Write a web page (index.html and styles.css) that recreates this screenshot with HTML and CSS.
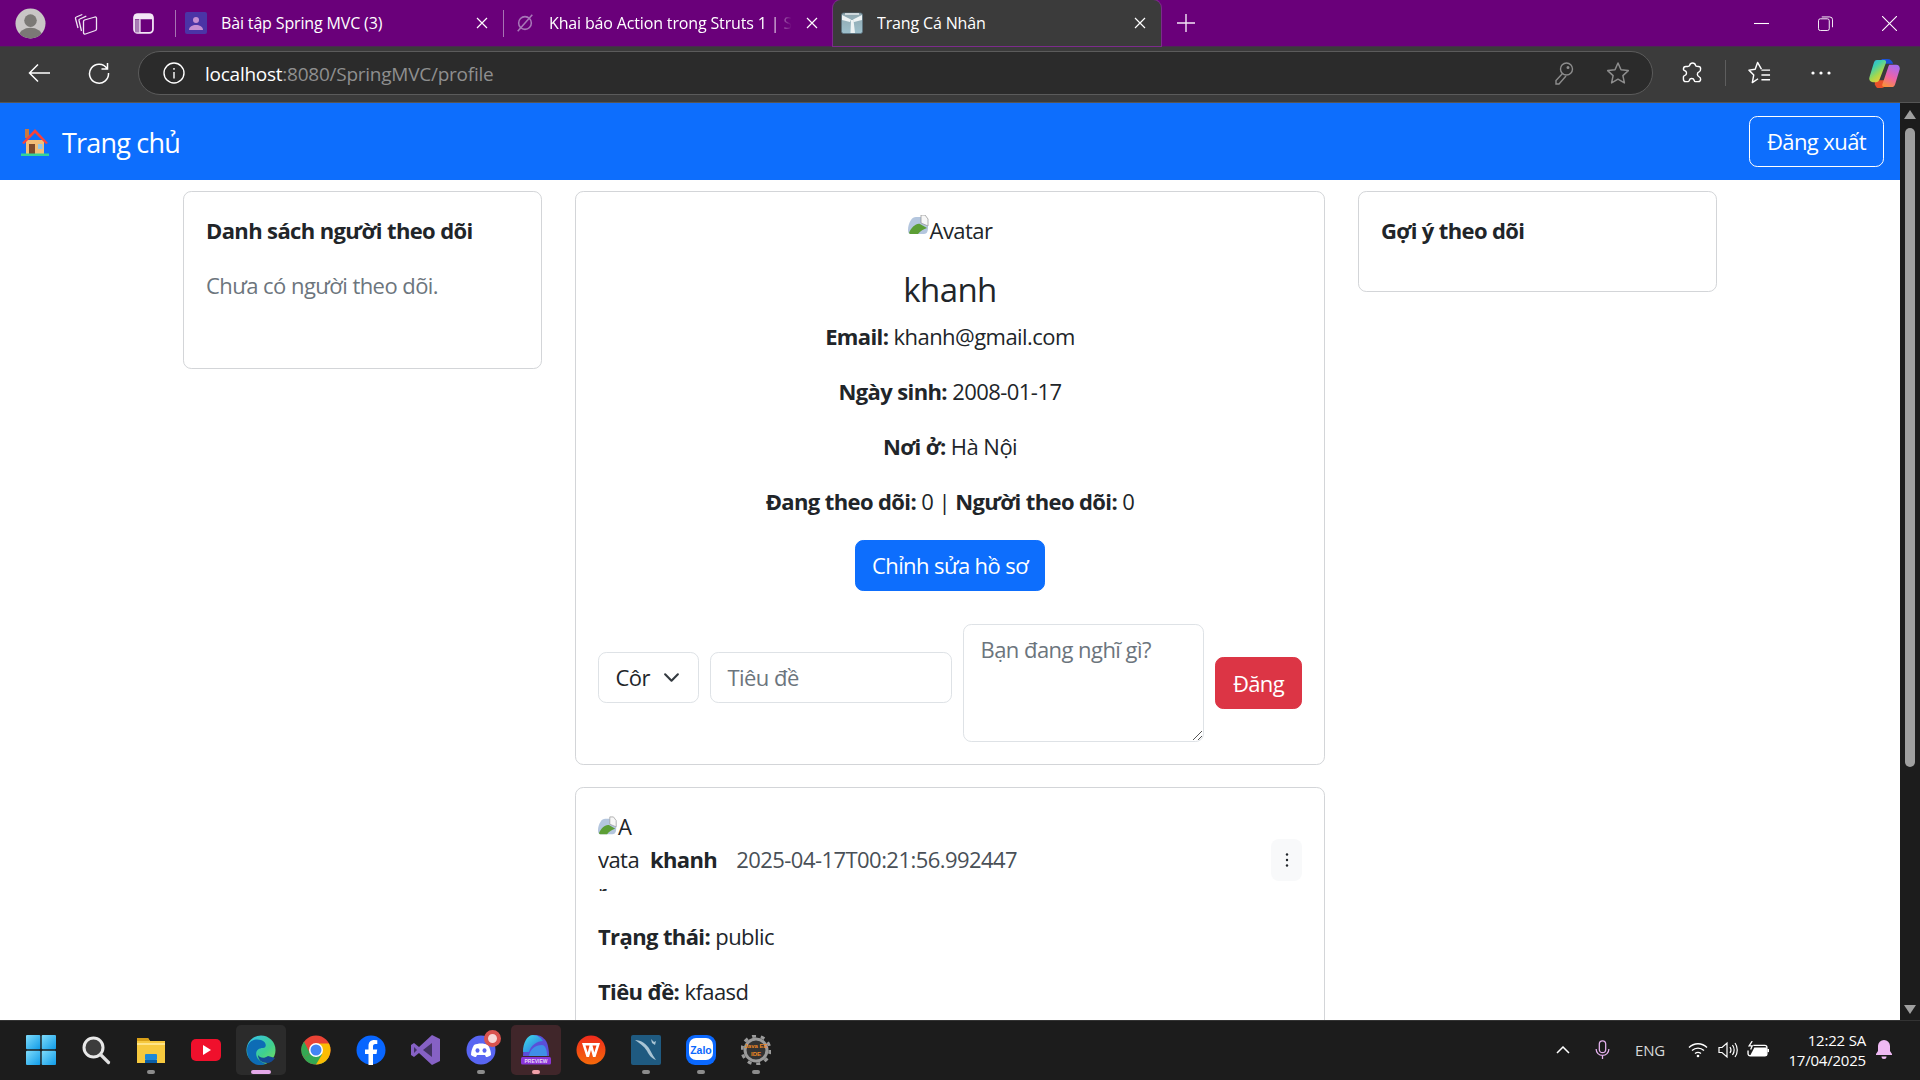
FILE: index.html
```html
<!DOCTYPE html>
<html lang="vi">
<head>
<meta charset="utf-8">
<title>Trang Cá Nhân</title>
<link rel="stylesheet" href="styles.css">
</head>
<body>
<div class="screen">
  <header class="tabstrip">
    <div class="strip-left">
      <svg class="avatar" viewBox="0 0 32 32"><defs><clipPath id="ac"><circle cx="16" cy="16" r="15.5"/></clipPath></defs><circle cx="16" cy="16" r="15.5" fill="#c9c6c6"/><g clip-path="url(#ac)"><circle cx="16" cy="13" r="6.5" fill="#7b7976"/><ellipse cx="16" cy="29" rx="12" ry="8.5" fill="#7b7976"/></g></svg>
      <svg class="workspaces" viewBox="0 0 24 24" fill="none" stroke="#efe4f2" stroke-width="1.300" stroke-linejoin="round"><path d="M4 17 1.500 7.500c-.2-.8.200-1.300.8-1.500l6-2.500"/><path d="M7.500 20 5 9.500c-.2-.8.200-1.300.8-1.500l6.500-2.800"/><path d="M9.500 10.500c0-.8.400-1.200 1-1.500l10.500-3c1-.2 1.500.3 1.500 1.200V18c0 .8-.4 1.200-1 1.500l-10 3.500c-1 .3-2-.2-2-1.200z"/></svg>
      <svg class="vtabs" viewBox="0 0 20 20"><rect x="1" y="1" width="18" height="18" rx="3.500" fill="#6a007a" stroke="#f3e6f6" stroke-width="1.700"/><path d="M1 2.500C1 1.500 2 1 3 1h14c1 0 2 .5 2 1.500V6H1z" fill="#f3e6f6"/><path d="M6.500 6v13" stroke="#f3e6f6" stroke-width="1.500"/><rect x="2" y="6.500" width="4" height="12" fill="#a87cb5"/></svg>
    </div>
    <div class="tab">
      <svg class="fav" viewBox="0 0 22 22"><rect width="22" height="22" rx="2" fill="#4b34a6"/><circle cx="11" cy="8" r="3" fill="#c58ed2"/><path d="M4 18c0-3.500 3.500-5 7-5s7 1.500 7 5z" fill="#c58ed2"/></svg>
      <span class="tab-title">Bài tập Spring MVC (3)</span>
      <svg class="tab-x" viewBox="0 0 12 12" stroke="#fff" stroke-width="1.200"><path d="M1 1l10 10M11 1 1 11"/></svg>
    </div>
    <div class="tab tab-second">
      <svg class="fav" viewBox="0 0 22 22" fill="none" stroke="#a877b8" stroke-width="1.700"><circle cx="11" cy="11" r="7"/><path d="M3 20 19 2"/></svg>
      <span class="tab-title fade">Khai báo Action trong Struts 1 | Sl</span>
      <svg class="tab-x" viewBox="0 0 12 12" stroke="#fff" stroke-width="1.200"><path d="M1 1l10 10M11 1 1 11"/></svg>
    </div>
    <div class="tab tab-active">
      <svg class="fav" viewBox="0 0 22 22"><defs><linearGradient id="gift" x1="0" y1="0" x2="0" y2="1"><stop offset="0" stop-color="#8fa6ae"/><stop offset="1" stop-color="#9dc0cc"/></linearGradient></defs><rect x=".5" y="1" width="21" height="20.500" rx="2" fill="url(#gift)" stroke="#5d7480" stroke-width=".8"/><path d="M1 3l9 4.500-1 2.500-8-2zM21 3l-9 4.500 1 2.500 8-2zM10 8h2.500l1.500 13H9.500z" fill="#eef3f4"/><path d="M4 1h14v2H4z" fill="#cfd8dc"/></svg>
      <span class="tab-title">Trang Cá Nhân</span>
      <svg class="tab-x" viewBox="0 0 12 12" stroke="#fff" stroke-width="1.200"><path d="M1 1l10 10M11 1 1 11"/></svg>
    </div>
    <svg class="newtab" viewBox="0 0 20 20" stroke="#f3e6f6" stroke-width="1.400"><path d="M10 1v18M1 10h18"/></svg>
    <div class="winctl">
      <svg viewBox="0 0 14 14" stroke="#fff" stroke-width="1"><path d="M0 7h14"/></svg>
      <svg viewBox="0 0 16 16" fill="none" stroke="#fff" stroke-width="1"><rect x=".5" y="3" width="11.500" height="12.500" rx="2"/><path d="M4 1h8.500a3 3 0 0 1 3 3v8"/></svg>
      <svg viewBox="0 0 14 14" stroke="#fff" stroke-width="1"><path d="M0 0l14 14M14 0 0 14"/></svg>
    </div>
  </header>

  <nav class="toolbar">
    <svg class="tool back" viewBox="0 0 22 20" fill="none" stroke="#fff" stroke-width="1.500"><path d="M22 10H1.500M10 1.500 1.500 10l8.500 8.500"/></svg>
    <svg class="tool reload" viewBox="0 0 22 22" fill="none" stroke="#fff" stroke-width="1.500"><path d="M19 6.500A9.500 9.500 0 1 0 20.500 11M19.500 1v6h-6"/></svg>
    <div class="addr">
      <svg class="info" viewBox="0 0 22 22" fill="none" stroke="#fff" stroke-width="1.400"><circle cx="11" cy="11" r="10"/><path d="M11 10v6.500M11 6v1.800"/></svg>
      <span class="url">localhost<span class="url-rest">:8080/SpringMVC/profile</span></span>
      <svg class="key" viewBox="0 0 20 24" fill="none" stroke="#8d8d8d" stroke-width="1.400"><circle cx="12.500" cy="8" r="6"/><path d="M8.500 12.500 2 19.500V23h3l7-8"/><circle cx="14" cy="6.500" r=".8" fill="#8d8d8d"/></svg>
      <svg class="star" viewBox="0 0 24 24" fill="none" stroke="#8d8d8d" stroke-width="1.500"><path d="m12 2 3 6.800 7.300.8-5.400 5 1.500 7.300L12 18.200 5.600 21.900l1.500-7.300-5.400-5 7.300-.8z" stroke-linejoin="round"/></svg>
    </div>
    <svg class="tool ext" viewBox="0 0 22 24" fill="none" stroke="#fff" stroke-width="1.500"><path d="M8 4a3.200 3.200 0 0 1 6.200 0c.2 1 1 1.200 3 1.200 1.500 0 2.300.8 2.300 2.300 0 2-.2 2.800-1.200 3a3 3 0 0 0 0 5.800c1 .3 1.200 1 1.200 2.200 0 1.500-1 2.500-2.500 2.500h-3c-.8 0-1-.5-1.200-1.200a2.700 2.700 0 0 0-5.200 0C7.300 20.500 7 21 6.200 21H4c-1.500 0-2.500-1-2.500-2.500V16c0-.8.500-1 1.200-1.200a2.800 2.800 0 0 0 0-5.400C2 9.200 1.500 9 1.500 8c0-1.800 1-2.800 2.500-2.800 2 0 3.800 0 4-1.200z"/></svg>
    <span class="tool-sep"></span>
    <svg class="tool favs" viewBox="0 0 24 24" fill="none" stroke="#fff" stroke-width="1.500"><path d="M14 8 10 1 7.500 8 1 9l5 5-1.500 8 6-4" stroke-linejoin="round"/><path d="M14 9h9M14 14h9M14 19h9"/></svg>
    <svg class="tool dots" viewBox="0 0 20 4" fill="#fff"><circle cx="2" cy="2" r="1.600"/><circle cx="10" cy="2" r="1.600"/><circle cx="18" cy="2" r="1.600"/></svg>
    <svg class="tool copilot" viewBox="0 0 32 30"><defs><linearGradient id="cp1" x1="0" y1="0" x2=".6" y2="1"><stop offset="0" stop-color="#2aa8f0"/><stop offset=".35" stop-color="#3ed0b0"/><stop offset=".7" stop-color="#a8d84a"/><stop offset="1" stop-color="#f4c83a"/></linearGradient><linearGradient id="cp2" x1=".7" y1="0" x2=".3" y2="1"><stop offset="0" stop-color="#a76cf0"/><stop offset=".55" stop-color="#ee62a8"/><stop offset="1" stop-color="#f8903e"/></linearGradient></defs><path d="M13 0h6c3 0 5 2 6 5H13z" fill="#1a52d8"/><path d="M6 22h13l-2 5c-1 2-2 3-4 3h-3c-2 0-3-1-4-4z" fill="#e8502a"/><path d="M8 1h7c2 0 3 1 2.500 3L11 21c-.8 2-2 3-4 3H4c-3 0-4.500-2.500-3.500-5.500L5 4c.5-2 1.500-3 3-3z" fill="url(#cp1)"/><path d="M21 6h7c3 0 4.500 2.500 3.500 5.500L27 26c-.6 2-1.800 3-3.800 3H16c-2 0-2.800-1.500-2.200-3l6-17.500c.3-1 .7-2 1.200-2.500z" fill="url(#cp2)"/></svg>
  </nav>

  <div class="viewport">
    <div class="page">
      <div class="navbar">
        <a class="brand">
          <svg class="house" viewBox="0 0 28 28"><rect x="4" y="1" width="4" height="9" fill="#c9793f"/><path d="M5 12h18v14H5z" fill="#f3be78"/><path d="M14 1 1 15l2 1L14 5l11 11 2-1z" fill="#f9423a"/><rect x="8" y="16" width="6" height="10" fill="#7d4a2d"/><rect x="17" y="16" width="4.500" height="5" fill="#8ec8ee"/><rect x="0" y="25.500" width="28" height="2.500" fill="#34d399"/></svg>
          <span>Trang chủ</span>
        </a>
        <button class="btn btn-outline">Đăng xuất</button>
      </div>

      <main class="columns">
        <aside class="card side-left">
          <h6 class="card-title">Danh sách người theo dõi</h6>
          <p class="muted">Chưa có người theo dõi.</p>
        </aside>

        <section class="feed">
          <div class="card profile">
            <div class="avatar-alt">
              <svg class="broken" viewBox="0 0 22 20"><path d="M3 5c1-2 3-3 5-3h8l4 4v7c0 3-1 6-4 6H3c-2 0-3-1-3-4 0-4 1-7 3-10z" fill="#b4c6de"/><path d="M13 0h4l3 4v7l-7-3z" fill="#f7f7f7" stroke="#9a9a9a" stroke-width=".8"/><path d="M1 18c2-5 7-10 11-9l7 4c-3 1-7 3-9 6H2z" fill="#5c9e35"/></svg><span>Avatar</span>
            </div>
            <h4 class="name">khanh</h4>
            <p><b>Email:</b> khanh@gmail.com</p>
            <p><b>Ngày sinh:</b> 2008-01-17</p>
            <p><b>Nơi ở:</b> Hà Nội</p>
            <p><b>Đang theo dõi:</b> 0 | <b>Người theo dõi:</b> 0</p>
            <button class="btn btn-primary">Chỉnh sửa hồ sơ</button>
            <form class="composer">
              <div class="select raised">Côr<svg viewBox="0 0 16 16" fill="none" stroke="#343a40" stroke-width="2"><path d="m2 5 6 6 6-6" stroke-linecap="round" stroke-linejoin="round"/></svg></div>
              <div class="input placeholder raised">Tiêu đề</div>
              <div class="textarea placeholder">Bạn đang nghĩ gì?<svg class="grip" viewBox="0 0 10 10" stroke="#555" stroke-width="1"><path d="M1 10 10 1M6 10l4-4"/></svg></div>
              <button type="button" class="btn btn-danger">Đăng</button>
            </form>
          </div>

          <article class="card post">
            <div class="post-head">
              <div class="thumb-alt"><svg class="broken" viewBox="0 0 22 20"><path d="M3 5c1-2 3-3 5-3h8l4 4v7c0 3-1 6-4 6H3c-2 0-3-1-3-4 0-4 1-7 3-10z" fill="#b4c6de"/><path d="M13 0h4l3 4v7l-7-3z" fill="#f7f7f7" stroke="#9a9a9a" stroke-width=".8"/><path d="M1 18c2-5 7-10 11-9l7 4c-3 1-7 3-9 6H2z" fill="#5c9e35"/></svg>A vata r</div>
              <b class="author">khanh</b>
              <span class="stamp">2025-04-17T00:21:56.992447</span>
              <button class="kebab"><svg viewBox="0 0 4 16" fill="#212529"><circle cx="2" cy="2.500" r="1.200"/><circle cx="2" cy="8" r="1.200"/><circle cx="2" cy="13.500" r="1.200"/></svg></button>
            </div>
            <p><b>Trạng thái:</b> public</p>
            <p><b>Tiêu đề:</b> kfaasd</p>
            <p><b>Nội dung:</b> asdf</p>
          </article>
        </section>

        <aside class="card side-right">
          <h6 class="card-title">Gợi ý theo dõi</h6>
        </aside>
      </main>
    </div>
    <div class="scrollbar">
      <span class="arrow-up"></span>
      <span class="thumb"></span>
      <span class="track-fill"></span>
      <span class="arrow-down"></span>
    </div>
  </div>

  <footer class="taskbar">
    <div class="tiles">
      <div class="tile"><svg viewBox="0 0 30 30"><defs><linearGradient id="win" x1="0" y1="0" x2="1" y2="1"><stop offset="0" stop-color="#7fdcfb"/><stop offset="1" stop-color="#0f9be8"/></linearGradient></defs><rect x="0" y="0" width="14.300" height="14.300" rx="1" fill="url(#win)"/><rect x="15.700" y="0" width="14.300" height="14.300" rx="1" fill="url(#win)"/><rect x="0" y="15.700" width="14.300" height="14.300" rx="1" fill="url(#win)"/><rect x="15.700" y="15.700" width="14.300" height="14.300" rx="1" fill="url(#win)"/></svg></div>
      <div class="tile"><svg viewBox="0 0 30 30" fill="none"><circle cx="12.500" cy="12.500" r="9.500" fill="#3c3c3c" stroke="#e8e8e8" stroke-width="3"/><path d="m19.500 19.500 8 8" stroke="#e0e0e0" stroke-width="3.200" stroke-linecap="round"/></svg></div>
      <div class="tile dot"><svg viewBox="0 0 30 30"><path d="M1 3h11l2 3h15v22H1z" fill="#f7c93e"/><path d="M1 3h11l2 3H1z" fill="#d9a018"/><path d="M1 8h28v2H1z" fill="#ffe487"/><rect x="9" y="19" width="12" height="6" rx="1" fill="#1e88d8"/><rect x="9" y="25" width="12" height="3" fill="#0a5ea8"/></svg></div>
      <div class="tile"><svg viewBox="0 0 30 30"><rect y="4" width="30" height="22" rx="5" fill="#f0102c"/><path d="m12 10 8 5-8 5z" fill="#fff"/></svg></div>
      <div class="tile tile-active bar"><svg viewBox="0 0 30 30"><defs><linearGradient id="ed1" x1="0" y1="0" x2="1" y2="1"><stop offset="0" stop-color="#35c1f1"/><stop offset=".6" stop-color="#3fcf8e"/><stop offset="1" stop-color="#7ddf5a"/></linearGradient></defs><circle cx="15" cy="15" r="14.500" fill="url(#ed1)"/><path d="M1 15C1 6 9 3 15 5c6 2 6 8 2 8-4.500 0-8 3-6.500 8 1.200 4 5 6 9.500 8-3 1-5 1-6 1C6 30 1 23 1 15z" fill="#0d6cb5"/><path d="M22 21c-4 3-8 2-10-1 0 5 4 8 9 8 3 0 6-2 8-5z" fill="#134a94"/></svg></div>
      <div class="tile"><svg viewBox="0 0 30 30"><circle cx="15" cy="15" r="14.500" fill="#ea4335"/><path d="M15 15 2.500 22.500A14.500 14.500 0 0 0 15 29.500z" fill="#34a853"/><path d="M15 15 27.500 22.500A14.500 14.500 0 0 1 15 29.500z" fill="#34a853"/><path d="M15 8.500h13A14.500 14.500 0 0 1 15 29.500l6-10z" fill="#fbbc04"/><path d="M2.500 22.500A14.500 14.500 0 0 1 3 6.500l6 12z" fill="#34a853"/><circle cx="15" cy="15" r="7" fill="#fff"/><circle cx="15" cy="15" r="5.500" fill="#4285f4"/></svg></div>
      <div class="tile"><svg viewBox="0 0 30 30"><circle cx="15" cy="15" r="14.500" fill="#0866ff"/><path d="M12.500 30V19H9v-4.500h3.500V11c0-4 2.300-6 5.800-6l3 .2v3.900h-2c-1.700 0-2.300 1-2.300 2.300v3.100h4.200l-.7 4.500h-3.500V30z" fill="#fff"/></svg></div>
      <div class="tile"><svg viewBox="0 0 30 30"><path d="M21 0 29 4v22l-8 4-13-12-5 4-3-2V10l3-2 5 4z" fill="#8661c5"/><path d="M21 8v14l-9-7z" fill="#2b2440" opacity=".75"/><path d="M3 12v6l3-3z" fill="#2b2440" opacity=".75"/></svg></div>
      <div class="tile dot"><svg viewBox="0 0 30 30"><circle cx="15" cy="15" r="14.500" fill="#5865f2"/><path d="M8 10c4-2 10-2 14 0 2 3 3 7 3 10-2 1.500-3.500 2-5 2l-1-2h-8l-1 2c-1.500 0-3-.5-5-2 0-3 1-7 3-10z" fill="#fff"/><ellipse cx="11.500" cy="15.500" rx="2" ry="2.300" fill="#5865f2"/><ellipse cx="18.500" cy="15.500" rx="2" ry="2.300" fill="#5865f2"/></svg><span class="badge"></span></div>
      <div class="tile tile-preview dot-pink"><svg viewBox="0 0 30 30"><defs><linearGradient id="pv" x1="0" y1="0" x2="1" y2="1"><stop offset="0" stop-color="#3fe0e8"/><stop offset="1" stop-color="#2a6be0"/></linearGradient></defs><path d="M14 0c5 0 8 2 11 6 2 3 3 9 3 15H2C2 10 6 0 14 0z" fill="#5a4fd8"/><path d="M12 0c5 0 8 3 10 6-6 0-12 4-14 11H2C2 8 6 0 12 0z" fill="url(#pv)"/><path d="M8 21c1-7 6-11 13-11 3 0 5 4 5 11z" fill="#3f8fe8"/><rect y="22" width="30" height="7.500" rx="1.500" fill="#8a35d8"/><text x="15" y="28" class="mini" text-anchor="middle">PREVIEW</text></svg></div>
      <div class="tile"><svg viewBox="0 0 30 30"><defs><linearGradient id="wps" x1="0" y1="0" x2="0" y2="1"><stop offset="0" stop-color="#f02a1c"/><stop offset="1" stop-color="#f56a0a"/></linearGradient></defs><circle cx="15" cy="15" r="14.500" fill="url(#wps)"/><path d="M6 8h18l-4.500 14H17l-2-7-2 7h-2.500zM9.500 10.500l2.200 7 1.800-7zM16.500 10.500l1.800 7 2.200-7z" fill="#fff" fill-rule="evenodd"/></svg></div>
      <div class="tile dot"><svg viewBox="0 0 30 30"><rect width="30" height="30" rx="2" fill="#1f5a80"/><path d="M4 5c6 0 12 4 15 10 2 4 4 7 6 10-5-2-7-5-9-9C13 11 8 8 4 5zM20 4l3 3 2-1-1 4-3-2z" fill="#a9c4d4"/></svg></div>
      <div class="tile dot"><svg viewBox="0 0 30 30"><rect width="30" height="30" rx="9" fill="#0a68fe"/><rect x="3" y="3" width="24" height="22" rx="7" fill="#fff"/><text x="15" y="18.500" class="zalo" text-anchor="middle">Zalo</text></svg></div>
      <div class="tile dot"><svg viewBox="0 0 30 30"><circle cx="15" cy="15" r="11" fill="#333" stroke="#9a9a9a" stroke-width="3"/><circle cx="15" cy="15" r="14" fill="none" stroke="#9a9a9a" stroke-width="3" stroke-dasharray="4 4.800"/><text x="15" y="13" class="java" text-anchor="middle">Java EE</text><text x="15" y="21" class="java" text-anchor="middle">IDE</text></svg></div>
    </div>
    <div class="tray">
      <svg class="t-chev" viewBox="0 0 14 8" fill="none" stroke="#fff" stroke-width="1.500"><path d="m1 7 6-6 6 6"/></svg>
      <svg class="t-mic" viewBox="0 0 16 22" fill="none" stroke="#e3b0ec" stroke-width="1.400"><rect x="4.500" y="1" width="7" height="13" rx="3.500"/><path d="M1 10c0 4 3 7 7 7s7-3 7-7M8 17v4"/></svg>
      <span class="t-lang">ENG</span>
      <svg class="t-wifi" viewBox="0 0 20 16" fill="none" stroke="#fff" stroke-width="1.400"><path d="M1 5.500c5-5 13-5 18 0M4 8.500c3.500-3.200 8.500-3.200 12 0M7 11.500c2-1.500 4-1.500 6 0"/><circle cx="10" cy="14" r="1.300" fill="#fff" stroke="none"/></svg>
      <svg class="t-vol" viewBox="0 0 20 18" fill="none" stroke="#fff" stroke-width="1.200"><path d="M1 6.500h3L9 2v14l-5-4.500H1zM12 6c1.200 1.800 1.200 4.200 0 6M14.500 4c2 3 2 7 0 10M17 2c3 4 3 10 0 14"/></svg>
      <svg class="t-bat" viewBox="0 0 21 16" fill="none" stroke="#fff" stroke-width="1.300"><path d="M6 4h11a2 2 0 0 1 2 2v6a2 2 0 0 1-2 2H3a2 2 0 0 1-2-2V9"/><path d="M3 14 7 6h12v8z" fill="#fff" stroke="none"/><path d="m5 0-3 4.500h3L3.500 8" stroke-width="1.200"/><rect x="19.500" y="7.500" width="1.500" height="3" fill="#fff" stroke="none"/></svg>
      <div class="clock"><span>12:22 SA</span><span>17/04/2025</span></div>
      <svg class="t-bell" viewBox="0 0 16 20" fill="#efb9f3"><path d="M8 0a6 6 0 0 1 6 6v5l2 3v1H0v-1l2-3V6a6 6 0 0 1 6-6z"/><path d="M5.500 16.500h5a2.500 2.500 0 0 1-5 0z"/></svg>
    </div>
  </footer>
</div>
</body>
</html>
```

FILE: styles.css
```css
* { box-sizing: border-box; }
html, body { margin: 0; height: 100%; overflow: hidden; }
body { font-family: "Open Sans", "Noto Sans", sans-serif; color: #212529; }
svg { display: block; flex: none; }

.screen { width: 1920px; height: 1080px; display: grid; grid-template-rows: 46px 57px 917px 60px; overflow: hidden; }

/* browser tab strip */
.tabstrip { background: #6a007a; display: flex; align-items: flex-start; color: #fff; font-size: 16px; letter-spacing: -.15px; }
.strip-left { width: 175px; height: 46px; display: flex; align-items: center; padding-left: 15px; }
.avatar { width: 31px; height: 31px; }
.workspaces { width: 24px; height: 24px; margin-left: 28px; }
.vtabs { width: 21px; height: 21px; margin-left: 35px; }
.tab { width: 328px; height: 46px; display: flex; align-items: center; padding-left: 9px; position: relative; border-left: 1px solid #a773b3; background-clip: padding-box; }
.tab::before { content: ""; position: absolute; left: -1px; top: 0; width: 1px; height: 10px; background: #6a007a; }
.tab::after { content: ""; position: absolute; left: -1px; bottom: 0; width: 1px; height: 9px; background: #6a007a; }
.tab-second { width: 330px; }
.tab-active { width: 328px; height: 46px; background: #3b3b3b; border: 0; padding-left: 8px; border-radius: 8px 8px 0 0; box-shadow: 0 0 0 1px #7c2c8b; }
.tab-active::before, .tab-active::after { display: none; }
.fav { width: 22px; height: 22px; }
.tab-title { margin-left: 14px; white-space: nowrap; overflow: hidden; flex: 1; }
.tab-second .fav { width: 20px; height: 20px; margin-left: 2px; }
.fade { -webkit-mask-image: linear-gradient(90deg, #000 90%, transparent 99%); mask-image: linear-gradient(90deg, #000 90%, transparent 99%); }
.tab-x { width: 12px; height: 12px; margin-right: 15px; margin-left: 12px; }
.newtab { width: 20px; height: 20px; margin: 13px 0 0 15px; }
.winctl { margin-left: auto; display: flex; align-items: center; height: 46px; padding-right: 23px; gap: 49px; }
.winctl svg { width: 15px; height: 15px; }

/* browser toolbar */
.toolbar { background: #3b3b3b; display: flex; align-items: center; padding: 0 20px 2px 28px; border-bottom: 1px solid #555; box-shadow: inset 0 1px 0 #4a2a50; }
.tool { flex: none; }
.back { width: 22px; height: 20px; }
.reload { width: 22px; height: 22px; margin-left: 38px; }
.addr { width: 1515px; height: 44px; margin-left: 28px; border: 1.500px solid #5b5b5b; border-radius: 22px; background: #2b2b2b; display: flex; align-items: center; padding: 0 22px 0 24px; }
.info { width: 22px; height: 22px; }
.url { margin: 1px 0 0 20px; font-size: 19px; letter-spacing: -.25px; color: #fff; }
.url-rest { color: #8f8f8f; }
.key { width: 20px; height: 24px; margin-left: auto; }
.star { width: 24px; height: 24px; margin-left: 32px; }
.ext { width: 21px; height: 24px; margin-left: 29px; }
.tool-sep { width: 1px; height: 26px; background: #5e5e5e; margin-left: 22px; }
.favs { width: 23px; height: 24px; margin-left: 22px; }
.dots { width: 20px; height: 4px; margin-left: 40px; }
.copilot { width: 31px; height: 29px; margin-left: 38px; }

/* page */
.viewport { display: flex; overflow: hidden; background: #fff; }
.page { width: 1900px; flex: none; }
.navbar { height: 77px; background: #0d6efd; display: flex; align-items: center; justify-content: space-between; padding: 0 16px 0 21px; }
.brand { display: flex; align-items: center; gap: 13px; color: #fff; font-size: 27px; letter-spacing: -.8px; padding-top: 1px; }
.house { width: 28px; height: 28px; }
.btn { font: inherit; font-size: 22px; letter-spacing: -.6px; line-height: 33px; padding: 8.250px 16.500px; border-radius: 8.250px; border: 1.400px solid transparent; color: #fff; background: none; }
.btn-outline { border-color: #fff; height: 51.500px; width: 135px; padding: 0; }
.btn-primary { background: #0d6efd; border-color: #0d6efd; width: 190px; padding: 8.250px 0; }
.btn-danger { background: #dc3545; border-color: #dc3545; width: 87px; padding: 8.250px 0; flex: none; }

.columns { display: grid; grid-template-columns: 359px 750px 359px; gap: 33px; padding: 11px 0 0 183px; align-items: start; font-size: 22px; line-height: 33px; letter-spacing: -.55px; }
.card { border: 1.400px solid #d3d5d8; border-radius: 8.250px; padding: 22px; background: #fff; }
.card p { margin: 0 0 22px; }
.card b, .card-title { letter-spacing: -.62px; }
.card-title { margin: 0 0 22px; font-size: 22px; line-height: 33px; font-weight: 700; }
.side-left { height: 178px; }
.side-right { height: 101px; }
.muted { color: #6c757d; }
.feed { display: flex; flex-direction: column; gap: 22px; min-width: 0; }
.profile { text-align: center; height: 574px; }
.avatar-alt { display: flex; justify-content: center; align-items: flex-start; margin-bottom: 23px; height: 33px; }
.broken { width: 22px; height: 20px; margin-top: 1px; }
.name { margin: 0 0 10px; font-size: 33px; line-height: 39.600px; font-weight: 500; letter-spacing: -.55px; }
.composer { display: flex; align-items: center; gap: 11px; margin-top: 33px; text-align: left; height: 118px; }
.select, .input, .textarea { border: 1.400px solid #dee2e6; border-radius: 8.250px; height: 51.500px; padding: 8.250px 16.500px; }
.raised { margin-bottom: 11px; }
.select { width: 101px; display: flex; align-items: center; justify-content: space-between; padding-right: 18px; flex: none; overflow: hidden; }
.select svg { width: 17px; height: 17px; }
.input { width: 242px; flex: none; }
.textarea { width: 241px; height: 118px; flex: none; position: relative; }
.placeholder { color: #6c757d; }
.grip { position: absolute; right: 1px; bottom: 1px; width: 10px; height: 10px; }
.post { height: 400px; }
.post-head { display: flex; align-items: center; height: 99px; margin-bottom: 11px; }
.thumb-alt { width: 41px; height: 81px; align-self: flex-start; overflow: hidden; margin-right: 11px; flex: none; }
.thumb-alt .broken { display: inline-block; vertical-align: -1px; margin: 0; width: 20px; height: 20px; }
.author { margin-right: 19px; letter-spacing: -.9px; }
.stamp { color: #495057; }
.kebab { margin-left: auto; width: 31px; height: 42px; border: 0; border-radius: 8px; background: #f8f9fa; display: flex; align-items: center; justify-content: center; padding: 0; }
.kebab svg { width: 4px; height: 16px; }

/* scrollbar */
.scrollbar { width: 20px; flex: none; background: #1c1c1c; display: flex; flex-direction: column; align-items: center; padding: 7px 0 6px; }
.arrow-up { width: 0; height: 0; border: 6.500px solid transparent; border-top: 0; border-bottom: 9px solid #9f9f9f; }
.thumb { width: 10px; height: 639px; border-radius: 5px; background: #9f9f9f; margin-top: 9px; }
.track-fill { flex: 1; }
.arrow-down { width: 0; height: 0; border: 6.500px solid transparent; border-bottom: 0; border-top: 9px solid #9f9f9f; }

/* taskbar */
.taskbar { background: #1c1c1c; border-top: 1px solid #333; display: flex; align-items: center; justify-content: space-between; padding: 0 0 2px 16px; color: #fff; }
.tiles { display: flex; gap: 5px; }
.tile { width: 50px; height: 50px; display: flex; align-items: center; justify-content: center; position: relative; border-radius: 5px; }
.tile svg { width: 30px; height: 30px; }
.tile-active { background: #2b2b2b; }
.tile-preview { background: #40262a; }
.dot::after, .dot-pink::after, .bar::after { content: ""; position: absolute; left: 50%; bottom: 1px; width: 8px; height: 4px; margin-left: -4px; border-radius: 2px; background: #8c8c8c; }
.dot-pink::after { background: #f0a0a8; }
.bar::after { width: 20px; margin-left: -10px; background: #e3a8e8; }
.badge { position: absolute; right: 5px; top: 5px; width: 17px; height: 17px; border-radius: 50%; background: #f6d8d8; border: 4px solid #d9534f; }
.mini { font: 700 5px "Liberation Sans", sans-serif; fill: #e8d8f8; }
.zalo { font: 700 10.500px "Liberation Sans", sans-serif; fill: #0a68fe; }
.java { font: 700 6px "Liberation Sans", sans-serif; fill: #f08a24; }
.tray { display: flex; align-items: center; height: 100%; padding-right: 28px; font-size: 15px; letter-spacing: -.2px; }
.t-chev { width: 14px; height: 8px; }
.t-mic { width: 15px; height: 20px; margin-left: 25px; }
.t-lang { width: 31px; margin-left: 25px; color: #d8d8d8; white-space: nowrap; }
.t-wifi { width: 20px; height: 16px; margin-left: 22px; }
.t-vol { width: 20px; height: 18px; margin-left: 10px; }
.t-bat { width: 22px; height: 17px; margin-left: 9px; }
.clock { width: 92px; margin-left: 5px; display: flex; flex-direction: column; align-items: flex-end; line-height: 20px; }
.t-bell { width: 16px; height: 20px; margin-left: 10px; }
```
